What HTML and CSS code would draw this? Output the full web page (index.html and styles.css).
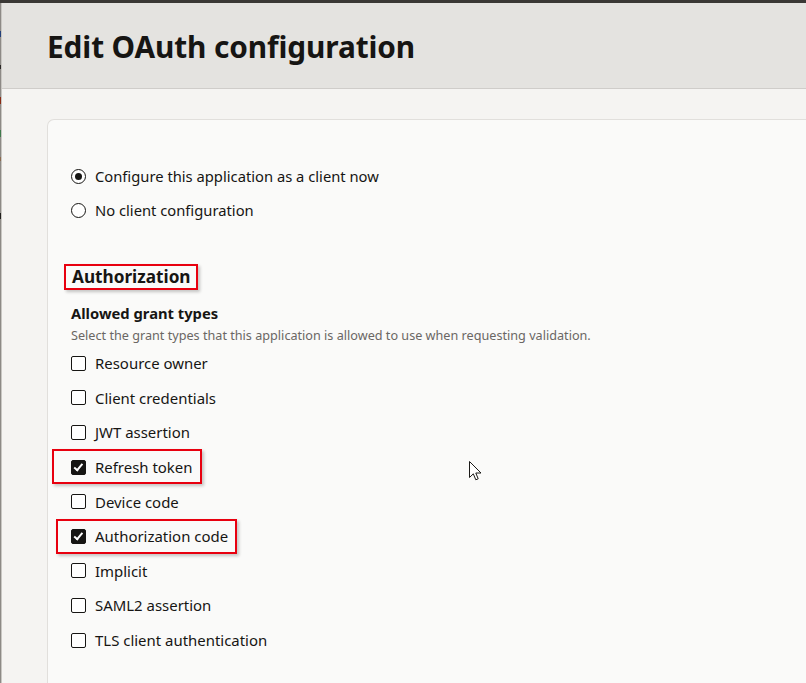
FILE: index.html
```html
<!DOCTYPE html>
<html lang="en">
<head>
<meta charset="utf-8">
<title>Edit OAuth configuration</title>
<link rel="stylesheet" href="styles.css">
</head>
<body>
<div class="topbar"></div>
<div class="app">
  <div class="rail">
    <span class="bit bit-blue1"></span>
    <span class="bit bit-dark1"></span>
    <span class="bit bit-red"></span>
    <span class="bit bit-green"></span>
    <span class="bit bit-brown"></span>
    <span class="bit bit-dark2"></span>
  </div>
  <div class="main">
    <header class="header">
      <h1 class="title">Edit OAuth configuration</h1>
    </header>
    <div class="content">
      <section class="card">
        <div class="radio-group">
          <label class="row"><span class="radio checked"></span><span class="label">Configure this application as a client now</span></label>
          <label class="row"><span class="radio"></span><span class="label">No client configuration</span></label>
        </div>

        <h2 class="section-title"><span class="mark-box">Authorization</span></h2>

        <div class="field-title">Allowed grant types</div>
        <div class="field-help">Select the grant types that this application is allowed to use when requesting validation.</div>

        <div class="check-group">
          <label class="row"><span class="check"></span><span class="label">Resource owner</span></label>
          <label class="row"><span class="check"></span><span class="label">Client credentials</span></label>
          <label class="row"><span class="check"></span><span class="label">JWT assertion</span></label>
          <label class="row marked mark-refresh"><span class="check checked"></span><span class="label">Refresh token</span></label>
          <label class="row"><span class="check"></span><span class="label">Device code</span></label>
          <label class="row marked mark-authcode"><span class="check checked"></span><span class="label">Authorization code</span></label>
          <label class="row"><span class="check"></span><span class="label">Implicit</span></label>
          <label class="row"><span class="check"></span><span class="label">SAML2 assertion</span></label>
          <label class="row"><span class="check"></span><span class="label">TLS client authentication</span></label>
        </div>
      </section>
    </div>
  </div>
</div>
<svg class="cursor" width="13" height="21" viewBox="0 0 13 21" xmlns="http://www.w3.org/2000/svg">
  <path d="M0.5 0.5 L0.5 16.5 L4.3 12.8 L6.8 18.8 L9.2 17.8 L6.8 12 L12 12 Z" fill="#ffffff" stroke="#1b1a18" stroke-width="1" stroke-linejoin="miter"/>
</svg>
</body>
</html>
```

FILE: styles.css
```css
* { box-sizing: border-box; }

html, body {
  margin: 0;
  padding: 0;
  height: 100%;
}

body {
  background: #f5f4f2;
  font-family: "Noto Sans", "Open Sans", "Liberation Sans", sans-serif;
  color: #161513;
  overflow: hidden;
  position: relative;
}

.topbar {
  height: 3px;
  background: #3a3835;
}

.app {
  display: flex;
  height: calc(100% - 3px);
}

.rail {
  width: 2px;
  flex: 0 0 2px;
  background: #8d8a86;
  border-right: 1px solid #c9c7c3;
  display: flex;
  flex-direction: column;
}

.bit { display: block; width: 1px; }
.bit-blue1 { height: 6px; margin-top: 28px; background: #23407a; }
.bit-dark1 { height: 4px; margin-top: 28px; background: #2a2826; }
.bit-red { height: 7px; margin-top: 28px; background: #8a2b14; }
.bit-green { height: 7px; margin-top: 26px; background: #3f7a4c; }
.bit-brown { height: 4px; margin-top: 20px; background: #8b6a4e; }
.bit-dark2 { height: 6px; margin-top: 52px; background: #1f1e1c; }

.main {
  flex: 1;
  min-width: 0;
  display: flex;
  flex-direction: column;
}

.header {
  height: 86px;
  flex: 0 0 86px;
  background: #e4e3e0;
  border-bottom: 1px solid #cfcdca;
  padding-left: 45px;
  display: flex;
  align-items: center;
}

.title {
  margin: 0;
  font-size: 29.8px;
  font-weight: 700;
  letter-spacing: -0.1px;
  line-height: 36px;
  position: relative;
  top: 1px;
}

.content {
  flex: 1;
  min-height: 0;
  padding: 30px 0 0 45px;
  display: flex;
}

.card {
  flex: 1;
  background: #fafaf9;
  border: 1px solid #e1dfdc;
  border-right: none;
  border-bottom: none;
  border-top-left-radius: 7px;
  padding: 39px 0 0 23px;
}

.radio-group,
.check-group {
  display: flex;
  flex-direction: column;
  align-items: flex-start;
}

.row {
  display: inline-flex;
  align-items: center;
  height: 34px;
  font-size: 14.75px;
  line-height: 20px;
}

.check-group .row { height: 34.6px; font-size: 14.95px; }

.label { margin-left: 9px; }

.radio {
  width: 15px;
  height: 15px;
  border: 1.5px solid #161513;
  border-radius: 50%;
  background: #ffffff;
  display: inline-flex;
  align-items: center;
  justify-content: center;
}

.radio.checked::after {
  content: "";
  width: 7px;
  height: 7px;
  border-radius: 50%;
  background: #161513;
}

.check {
  width: 15px;
  height: 15px;
  border: 1.5px solid #161513;
  border-radius: 2px;
  background: #ffffff;
  position: relative;
}

.check.checked {
  background: #161513;
}

.check.checked::after {
  content: "";
  position: absolute;
  left: 3.5px;
  top: 1.5px;
  width: 3px;
  height: 6.5px;
  border-right: 2px solid #ffffff;
  border-bottom: 2px solid #ffffff;
  transform: rotate(40deg);
}

.section-title {
  margin: 37px 0 0 -7px;
  font-size: 17.2px;
  font-weight: 700;
  line-height: 22px;
}

.mark-box {
  display: inline-block;
  border: 2px solid #e8000f;
  padding: 0 5px 0 6px;
  box-shadow: 2px 2px 3px rgba(0, 0, 0, 0.22);
}

.field-title {
  margin-top: 13px;
  font-size: 14.75px;
  font-weight: 700;
  line-height: 20px;
}

.field-help {
  margin-top: 3px;
  font-size: 12.65px;
  line-height: 18px;
  color: #6a6764;
  margin-bottom: 2px;
}

.marked { position: relative; }

.marked::after {
  content: "";
  position: absolute;
  top: 0;
  bottom: 0;
  border: 2px solid #e8000f;
  box-shadow: 2px 2px 3px rgba(0, 0, 0, 0.22);
  pointer-events: none;
}

.mark-refresh::after { left: -19px; right: -10px; top: -0.5px; }
.mark-authcode::after { left: -15px; right: -9px; bottom: -0.5px; }

.cursor {
  position: absolute;
  left: 469px;
  top: 461px;
}
```
